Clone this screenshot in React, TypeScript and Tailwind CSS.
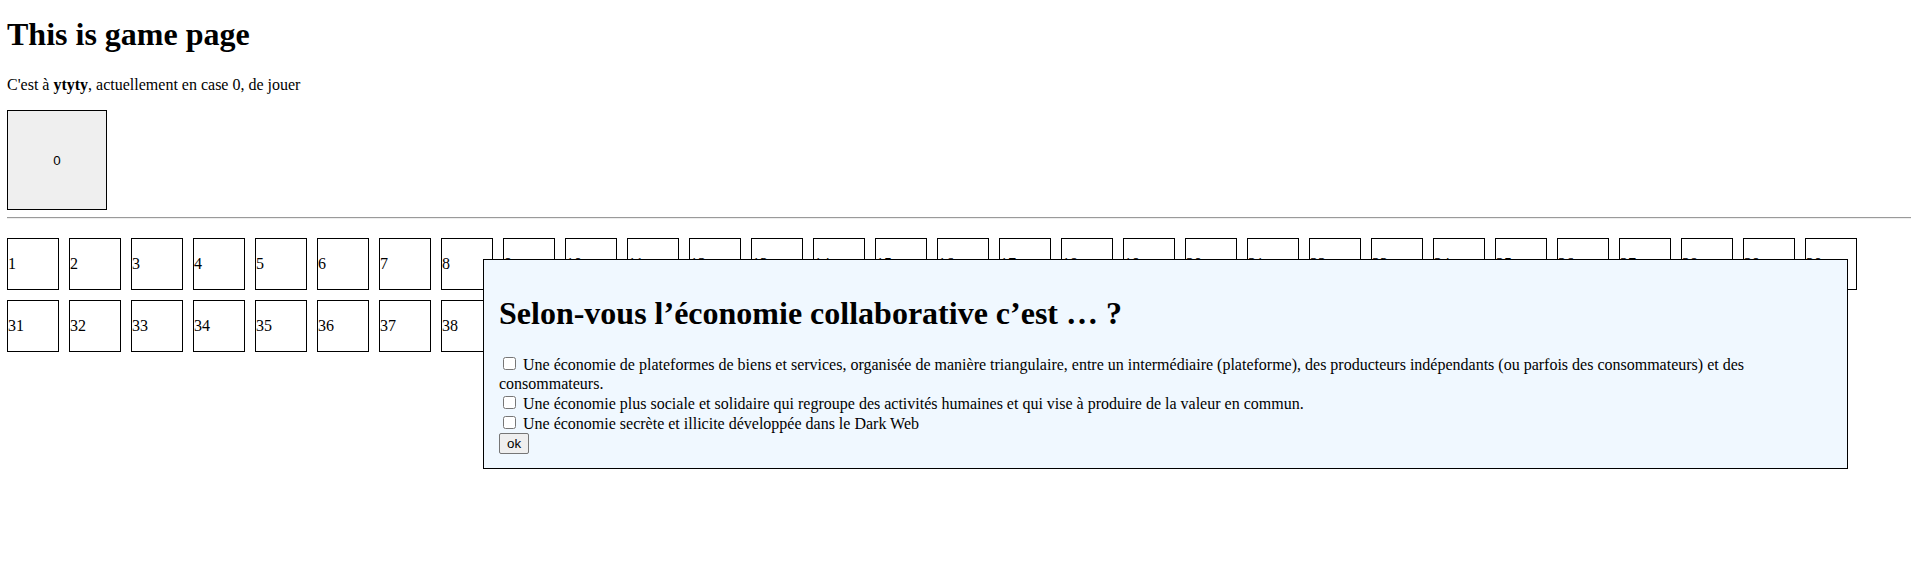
import { useState } from 'react'

interface Answer {
  id: string
  label: string
}

const answers: Answer[] = [
  {
    id: 'a1',
    label:
      'Une économie de plateformes de biens et services, organisée de manière triangulaire, entre un intermédiaire (plateforme), des producteurs indépendants (ou parfois des consommateurs) et des consommateurs.',
  },
  {
    id: 'a2',
    label:
      'Une économie plus sociale et solidaire qui regroupe des activités humaines et qui vise à produire de la valeur en commun.',
  },
  { id: 'a3', label: 'Une économie secrète et illicite développée dans le Dark Web' },
]

// board cells, the modal hides most of the second row
const cells = Array.from({ length: 50 }, (_, i) => i + 1)

function Cell({ n }: { n: number }) {
  return (
    <div className="w-[52px] h-[52px] border border-black flex items-center">
      {n}
    </div>
  )
}

function QuestionModal({ onSubmit }: { onSubmit: (checked: string[]) => void }) {
  const [checked, setChecked] = useState<string[]>([])

  const toggle = (id: string) => {
    setChecked(prev => (prev.includes(id) ? prev.filter(c => c !== id) : [...prev, id]))
  }

  return (
    <div className="absolute left-[483px] top-[259px] w-[1365px] border border-black bg-[#f0f8ff] px-[15px] pt-[15px] pb-[14px]">
      <h2 className="mt-[20px] text-[32px] font-bold leading-[37px]">
        Selon-vous l’économie collaborative c’est … ?
      </h2>
      <div className="mt-[22px] leading-[19px]">
        {answers.map(a => (
          <span key={a.id}>
            <input
              type="checkbox"
              className="m-[3px_3px_3px_4px]"
              checked={checked.includes(a.id)}
              onChange={() => toggle(a.id)}
            />{' '}
            {a.label}
            <br />
          </span>
        ))}
        <button
          onClick={() => onSubmit(checked)}
          className="bg-[#efefef] border border-[#767676] rounded-[2px] px-[7px] py-[2px] font-['Liberation_Sans',Arial,sans-serif] text-[13.33px] leading-[normal] text-black"
        >
          ok
        </button>
      </div>
    </div>
  )
}

export default function App() {
  const [open, setOpen] = useState(true)

  return (
    <div className="relative min-h-[565px] bg-white pl-[7px] pr-[12px] font-['Liberation_Serif','Times_New_Roman',serif] text-[16px] leading-[normal] text-black">
      <h1 className="pt-[16px] text-[32px] font-bold leading-[37px]">This is game page</h1>
      <p className="mt-[23px]">
        C'est à <b>ytyty</b>, actuellement en case 0, de jouer
      </p>
      <div className="mt-[16px] w-[100px] h-[100px] border border-black bg-[#efefef] flex items-center justify-center font-['Liberation_Sans',Arial,sans-serif] text-[13.33px]">
        0
      </div>
      <hr className="mt-[7px] border-t border-b border-t-[#9a9a9a] border-b-[#eeeeee]" />
      <div className="mt-[19px] flex flex-wrap gap-[10px]">
        {cells.map(n => (
          <Cell key={n} n={n} />
        ))}
      </div>
      {open && <QuestionModal onSubmit={() => setOpen(false)} />}
    </div>
  )
}
